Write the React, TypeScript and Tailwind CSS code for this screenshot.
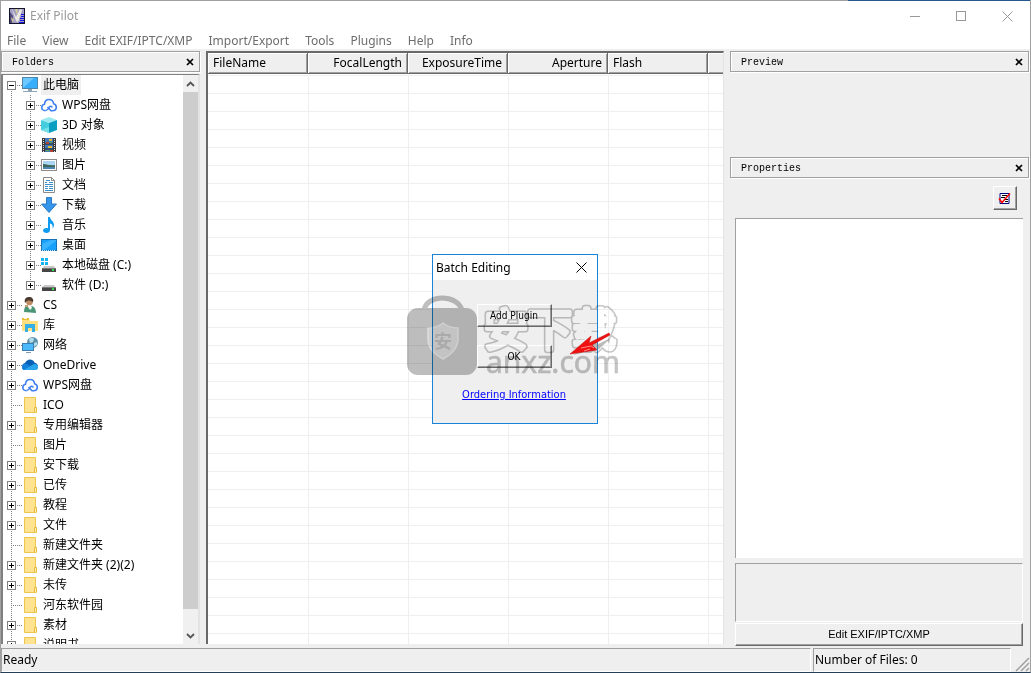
import type { ReactNode } from "react";

type IconName =
  | "pc" | "cloud" | "cube" | "video" | "picture" | "doc" | "download" | "music" | "desktop"
  | "sysdisk" | "disk" | "user" | "library" | "network" | "onedrive" | "folder";

interface Node {
  label: string;
  icon: IconName;
  level: 0 | 1;
  box: "plus" | "minus" | "none";
  edge?: "first" | "last";
}

const nodes: Node[] = [
  { label: "此电脑", icon: "pc", level: 0, box: "minus", edge: "first" },
  { label: "WPS网盘", icon: "cloud", level: 1, box: "plus" },
  { label: "3D 对象", icon: "cube", level: 1, box: "plus" },
  { label: "视频", icon: "video", level: 1, box: "plus" },
  { label: "图片", icon: "picture", level: 1, box: "plus" },
  { label: "文档", icon: "doc", level: 1, box: "plus" },
  { label: "下载", icon: "download", level: 1, box: "plus" },
  { label: "音乐", icon: "music", level: 1, box: "plus" },
  { label: "桌面", icon: "desktop", level: 1, box: "plus" },
  { label: "本地磁盘 (C:)", icon: "sysdisk", level: 1, box: "plus" },
  { label: "软件 (D:)", icon: "disk", level: 1, box: "plus", edge: "last" },
  { label: "CS", icon: "user", level: 0, box: "plus" },
  { label: "库", icon: "library", level: 0, box: "plus" },
  { label: "网络", icon: "network", level: 0, box: "plus" },
  { label: "OneDrive", icon: "onedrive", level: 0, box: "plus" },
  { label: "WPS网盘", icon: "cloud", level: 0, box: "plus" },
  { label: "ICO", icon: "folder", level: 0, box: "none" },
  { label: "专用编辑器", icon: "folder", level: 0, box: "plus" },
  { label: "图片", icon: "folder", level: 0, box: "none" },
  { label: "安下载", icon: "folder", level: 0, box: "plus" },
  { label: "已传", icon: "folder", level: 0, box: "plus" },
  { label: "教程", icon: "folder", level: 0, box: "plus" },
  { label: "文件", icon: "folder", level: 0, box: "plus" },
  { label: "新建文件夹", icon: "folder", level: 0, box: "none" },
  { label: "新建文件夹 (2)(2)", icon: "folder", level: 0, box: "plus" },
  { label: "未传", icon: "folder", level: 0, box: "plus" },
  { label: "河东软件园", icon: "folder", level: 0, box: "none" },
  { label: "素材", icon: "folder", level: 0, box: "plus" },
  { label: "说明书", icon: "folder", level: 0, box: "plus" },
];

const drive = (
  <>
    <path d="M3 9h10l2 3H1z" fill="#c9c9c9" />
    <rect x="1" y="11" width="14" height="4" fill="#454545" />
    <path d="M1 11.5h14" stroke="#777" />
    <rect x="11" y="12" width="2" height="2" fill="#2fe04a" />
  </>
);

const iconArt: Record<IconName, ReactNode> = {
  pc: (
    <>
      <rect x="0.5" y="0.5" width="15" height="11" fill="#36aefb" stroke="#4c86a8" />
      <path d="M1 11V1h11z" fill="#6cc8ff" />
      <rect x="6" y="12" width="4" height="2" fill="#8ca4b3" />
      <rect x="1" y="14" width="14" height="1" fill="#8ca4b3" />
    </>
  ),
  cloud: (
    <>
      <path d="M4.5 13.7C2.200 13.700.8 12.300.8 10.400c0-1.700 1.100-2.900 2.700-3.200C3.700 4.400 5.600 2.500 8.100 2.500c2.400 0 4.200 1.700 4.500 4.200 1.700.4 2.700 1.700 2.700 3.300 0 2-1.500 3.700-3.700 3.700H10L6.500 10" fill="none" stroke="#3f7ff0" strokeWidth="1.6" />
      <path d="M4.500 13.500c2.500 0 2.800-1.500 3.800-3.300.7-1.200 2.500-1.200 3 .2" fill="none" stroke="#3f7ff0" strokeWidth="1.500" />
    </>
  ),
  cube: (
    <>
      <path d="M0 3 8 0l8 3-8 3z" fill="#9be9f0" />
      <path d="M0 3l8 3v10l-8-3z" fill="#45cddd" />
      <path d="M16 3 8 6v10l8-3z" fill="#0a9fc0" />
      <path d="M0 13l8-3v6z" fill="#75dfe8" />
    </>
  ),
  video: (
    <>
      <rect x="1" y="1" width="14" height="14" fill="#3b3b3b" />
      <rect x="4" y="1" width="8" height="14" fill="#4379b8" />
      <path d="M2.500 2v13M13.500 2v13" stroke="#ddd" strokeDasharray="1 1" />
      <path d="M4 7h8M4 12h8" stroke="#222" />
      <path d="M8 2h3v2H8zM7 9h4v2H7z" fill="#e6bd2e" />
      <path d="M5 5h3v2H5zM9 13h3v2H9z" fill="#b5432e" />
      <path d="M9 5h2v1H9zM5 13h3v1H5z" fill="#54a843" />
    </>
  ),
  picture: (
    <>
      <rect x="0.500" y="2.500" width="15" height="11" fill="#fff" stroke="#8d8d8d" />
      <rect x="2" y="4" width="12" height="8" fill="#a9d5f2" />
      <path d="M2 7c4 0 6 2 12 1v2H2z" fill="#3c6655" />
      <rect x="2" y="10" width="12" height="2" fill="#4d86b5" />
    </>
  ),
  doc: (
    <>
      <path d="M2.500.5h8l3 3v12h-11z" fill="#fdfdfd" stroke="#8b8b8b" />
      <path d="M10.500.5v3h3" fill="none" stroke="#8b8b8b" />
      <path d="M5 3.500h4M4 5.500h2M8 5.500h4M4 7.500h8M4 9.500h3M8 9.500h4M4 11.500h3M8 11.500h4M4 13.500h8" stroke="#3b8fc9" />
    </>
  ),
  download: <path d="M5.500.5h5V7h5L8 15.500.5 7h5z" fill="#3595e8" stroke="#2a7cc8" />,
  music: <path d="M7 0h2c0 3 4 4 4 8 0 2-1 3-1.500 3.500.7-3-.5-4.500-2.500-5V13c0 1.800-1.500 3-3.500 3S2 15 2 13.500 3.500 11 5.500 11c.6 0 1 .1 1.500.3z" fill="#0f9bf0" />,
  desktop: (
    <>
      <rect x="0.500" y="2.500" width="15" height="11" fill="#18a0fb" stroke="#1572b8" />
      <path d="M1 13V7L10 3h5v1L3 13z" fill="#3cb3ff" />
      <path d="M1 13.500h14" stroke="#bfe4ff" strokeDasharray="1 1" />
    </>
  ),
  sysdisk: (
    <>
      {drive}
      <path d="M0 1h3v3H0zM4 1h3v3H4zM0 5h3v3H0zM4 5h3v3H4z" fill="#12b5ef" />
    </>
  ),
  disk: <g transform="translate(0 -1)">{drive}</g>,
  user: (
    <>
      <path d="M2 15c0-5 2-7 5-6 4-1 7 2 7 7z" fill="#4b9676" />
      <path d="M6 8h3l1 3-2 2-2-3z" fill="#f3f5ee" />
      <circle cx="7.500" cy="5" r="3.300" fill="#bd8a63" />
      <path d="M3 6C2 2 4 0 7 0s5 2 4 5c-2-1-4-2-6-1z" fill="#4b3a30" />
      <path d="M3 8h3v2H3z" fill="#c89870" />
    </>
  ),
  library: (
    <>
      <path d="M0 2h7l1 2h8v10H0z" fill="#ffdf7e" />
      <path d="M0 1h7v2H0z" fill="#edbd32" />
      <path d="M2 1.500h3" stroke="#fff6d2" />
      <path d="M3 7h10v8h-3v-4H6v4H3z" fill="#35afe5" />
    </>
  ),
  network: (
    <>
      <circle cx="10.500" cy="5.500" r="5.500" fill="#5d92ad" />
      <path d="M7 2c2-2 4-1 5 0l-1 3-3 1zM12 6l3-1v3l-3 2z" fill="#b4dce8" />
      <rect x="0.500" y="6.500" width="11" height="7" fill="#4bb8fa" stroke="#3a7fb0" />
      <path d="M4 15.500h5" stroke="#849baa" />
    </>
  ),
  onedrive: (
    <>
      <path d="M3 6C5 2 10 1 13 6c2 0 3 2 3 4l-8 3H3c-4 0-4-6 0-7z" fill="#0860b6" />
      <path d="M0 10c0-3 3-4 5-3l10 6H3c-2 0-3-1-3-3z" fill="#1380d9" />
      <path d="M2 13l8-5c4-3 7 1 6 3 0 1-1 2-3 2z" fill="#2aa7ec" />
    </>
  ),
  folder: (
    <>
      <path d="M2.500.5h11v10h1v5h-12z" fill="#ffe391" stroke="#edc64e" />
      <path d="M12.500 15v-4.500h2V15" fill="#fff0b5" stroke="#e5b93e" />
    </>
  ),
};

function Branch({ box, edge }: { box: Node["box"]; edge?: Node["edge"] }) {
  return (
    <svg width="19" height="20" viewBox="0 0 19 20" shapeRendering="crispEdges" aria-hidden="true">
      <path
        d={edge === "first" ? "M8.500 10v10" : edge === "last" ? "M8.500 0v10" : "M8.500 0v20"}
        stroke="#808080"
        strokeDasharray="1 1"
      />
      <path d="M8 10.500h11" stroke="#808080" strokeDasharray="1 1" />
      {box !== "none" && (
        <>
          <rect x="4.500" y="6.500" width="8" height="8" fill="#fff" stroke="#808080" />
          <path d={box === "plus" ? "M6 10.500h5M8.500 8v5" : "M6 10.500h5"} stroke="#000" />
        </>
      )}
    </svg>
  );
}

function TreeRow({ node }: { node: Node }) {
  return (
    <li className="flex h-5 items-center whitespace-nowrap">
      {node.level === 1 && (
        <svg width="19" height="20" viewBox="0 0 19 20" shapeRendering="crispEdges" aria-hidden="true">
          <path d="M8.500 0v20" stroke="#808080" strokeDasharray="1 1" />
        </svg>
      )}
      {node.box === "none" ? (
        <Branch box="none" />
      ) : (
        <button type="button" aria-label={`Toggle ${node.label}`}>
          <Branch box={node.box} edge={node.edge} />
        </button>
      )}
      <svg width="16" height="16" viewBox="0 0 16 16" aria-hidden="true">
        {iconArt[node.icon]}
      </svg>
      <span className={node.edge === "first" ? "ml-[3px] bg-[#efefef] px-[2px] leading-5" : "ml-[3px] px-[2px] leading-5"}>
        {node.label}
      </span>
    </li>
  );
}

function PanelHeader({ title }: { title: string }) {
  return (
    <div className="flex h-[21px] shrink-0 items-center justify-between border border-[#a0a0a0] pr-[5px] pl-[10px] shadow-[inset_1px_1px_0_#fff,1px_1px_0_#fff]">
      <h2 className="pt-[2px] font-['Liberation_Mono',monospace] text-[10px]">{title}</h2>
      <button type="button" aria-label={`Close ${title}`}>
        <svg width="8" height="8" viewBox="0 0 8 8" aria-hidden="true">
          <path d="M1 1l6 6M7 1L1 7" stroke="#000" strokeWidth="1.700" />
        </svg>
      </button>
    </div>
  );
}

const columns = [
  { name: "FileName", align: "text-left" },
  { name: "FocalLength", align: "text-right" },
  { name: "ExposureTime", align: "text-right" },
  { name: "Aperture", align: "text-right" },
  { name: "Flash", align: "text-left" },
];

function FileTable() {
  return (
    <section className="mb-[2px] ml-[6px] min-w-0 flex-1 overflow-hidden border-t-2 border-r border-l-2 border-t-[#696969] border-r-[#e3e3e3] border-l-[#696969] bg-white">
      <table className="w-full table-fixed border-separate border-spacing-0">
        <thead>
          <tr>
            {columns.map((c) => (
              <th
                key={c.name}
                className={`h-[21px] w-[100px] border-r border-b border-[#696969] bg-[#efefef] px-[5px] py-0 leading-5 font-normal shadow-[inset_1px_1px_0_#fff,inset_-1px_-1px_0_#a0a0a0] ${c.align}`}
              >
                {c.name}
              </th>
            ))}
            <th className="border-b border-[#696969] bg-[#efefef] shadow-[inset_1px_1px_0_#fff,inset_0_-1px_0_#a0a0a0]" />
          </tr>
        </thead>
        <tbody>
          <tr>
            <td colSpan={6} className="h-[2px] border-b border-[#efefef] p-0" />
          </tr>
          {Array.from({ length: 40 }, (_, row) => (
            <tr key={row}>
              <td className="h-[18px] border-b border-[#efefef] p-0" />
              {columns.map((c) => (
                <td key={c.name} className="border-b border-l border-[#efefef] p-0" />
              ))}
            </tr>
          ))}
        </tbody>
      </table>
    </section>
  );
}

function BatchDialog() {
  return (
    <div
      role="dialog"
      aria-label="Batch Editing"
      className="absolute top-[254px] left-[431px] flex h-[170px] w-[166px] flex-col border border-[#1883d7] bg-[#efefef]"
    >
      <div className="flex h-[25px] items-center justify-between bg-white pr-[10px] pl-[3px]">
        <h2>Batch Editing</h2>
        <button type="button" aria-label="Close dialog">
          <svg width="11" height="11" viewBox="0 0 11 11" aria-hidden="true">
            <path d="M.5.5l10 10M10.500.5l-10 10" stroke="#000" />
          </svg>
        </button>
      </div>
      <div className="flex flex-col items-center pt-6 pr-[2px] font-['DejaVu_Sans_Condensed','DejaVu_Sans',sans-serif] text-[10px]">
        <button
          type="button"
          className="h-[23px] w-[75px] border border-t-white border-r-[#696969] border-b-[#696969] border-l-white shadow-[inset_-1px_-1px_0_#a0a0a0]"
        >
          Add Plugin
        </button>
        <button
          type="button"
          className="mt-[18px] h-[23px] w-[75px] border border-t-white border-r-[#696969] border-b-[#696969] border-l-white shadow-[inset_-1px_-1px_0_#a0a0a0]"
        >
          OK
        </button>
        <a href="#order" className="mt-[19px] text-[11px] leading-4 text-[#0000ff] underline">
          Ordering Information
        </a>
      </div>
    </div>
  );
}

function Watermark() {
  return (
    <svg
      className="pointer-events-none absolute top-[290px] left-[401px] mix-blend-multiply"
      width="226"
      height="94"
      viewBox="0 0 226 94"
      aria-hidden="true"
    >
      <defs>
        <mask id="outline" maskUnits="userSpaceOnUse" x="72" y="8" width="154" height="60">
          <g fontFamily="Noto Sans CJK SC, sans-serif" fontSize="44" strokeLinejoin="round">
            <text x="82" y="56" fill="#fff" stroke="#fff" strokeWidth="7">安下载</text>
            <text x="82" y="56" fill="#000" stroke="#000" strokeWidth="4">安下载</text>
          </g>
        </mask>
      </defs>
      <path d="M22 20C25 4 55 4 60 20" fill="none" stroke="#bfbfbf" strokeWidth="5" />
      <rect x="5" y="18" width="70" height="67" rx="11" fill="#bdbdbd" />
      <path d="M41 33c5 4 10 5 15 5v11c0 9-6 15-15 20-9-5-15-11-15-20V38c5 0 10-1 15-5z" fill="#d0d0d0" stroke="#dddddd" strokeWidth="1.500" />
      <text x="32" y="58" fontFamily="Noto Sans CJK SC, sans-serif" fontWeight="700" fontSize="18" fill="#b6b6b6">安</text>
      <rect x="72" y="8" width="154" height="60" fill="#c6c6c6" mask="url(#outline)" />
      <text x="84" y="83" fontFamily="Noto Sans, sans-serif" fontSize="30" fill="#c4c4c4" stroke="#c4c4c4" strokeWidth="0.600">anxz.com</text>
    </svg>
  );
}

function Pointer() {
  return (
    <svg
      className="pointer-events-none absolute top-[330px] left-[566px]"
      width="46"
      height="30"
      viewBox="0 0 46 30"
      aria-hidden="true"
    >
      <path d="M6 25l26-6 12-11-13 6-2-4z" fill="#777" fillOpacity="0.500" />
      <path d="M3 24L24 6l-2 7L42 3l1 2-18 10 5 5z" fill="#f01010" stroke="#c00d0d" strokeWidth="0.500" />
      <path d="M14 18l10-2 3 2M17 21l6-2" fill="none" stroke="#ff8a80" />
    </svg>
  );
}

export default function App() {
  return (
    <div className="relative flex h-screen flex-col overflow-hidden border-x border-b border-x-[#a0a0a0] border-b-[#263f58] bg-[#efefef] font-['Noto_Sans','Noto_Sans_CJK_SC',sans-serif] text-[12px] leading-4 text-black">
      <div className="flex h-px shrink-0">
        <div className="flex-1 bg-[#a0a0a0]" />
        <div className="w-[182px] bg-[#25578a]" />
      </div>

      <header className="shrink-0 bg-white">
        <div className="flex h-[30px] items-center pr-[17px] pl-2 text-[#999]">
          <svg width="16" height="16" viewBox="0 0 16 16" aria-hidden="true">
            <rect width="16" height="16" fill="#15152b" />
            <rect x="1" y="1" width="14" height="14" fill="#a39fc4" />
            <path d="M1 4l3 4-1 7H1z" fill="#4c4778" />
            <path d="M3 1l4 8 4-8 2 1-4 12-2-1z" fill="#ece9e2" />
            <path d="M6 1h3L8 7zM2 9l3 3-2 2z" fill="#d5cc96" />
            <path d="M12 6.500h3M12 8.500h3M11 10.500h4M11 12.500h4M10 14.500h5" stroke="#1717e0" />
          </svg>
          <h1 className="ml-[5px] flex-1">Exif Pilot</h1>
          <div className="flex items-center gap-[35px]">
            <button type="button" aria-label="Minimize">
              <svg width="11" height="11" viewBox="0 0 11 11" aria-hidden="true"><path d="M0 5.500h10" stroke="#999" /></svg>
            </button>
            <button type="button" aria-label="Maximize">
              <svg width="11" height="11" viewBox="0 0 11 11" aria-hidden="true"><rect x="0.500" y="0.500" width="9" height="9" fill="none" stroke="#999" /></svg>
            </button>
            <button type="button" aria-label="Close">
              <svg width="11" height="11" viewBox="0 0 11 11" aria-hidden="true"><path d="M.5.5l10 10M10.500.5l-10 10" stroke="#999" /></svg>
            </button>
          </div>
        </div>
        <nav className="flex h-[18px] items-end gap-4 pl-[6px] text-[#6d6d6d]">
          {["File", "View", "Edit EXIF/IPTC/XMP", "Import/Export", "Tools", "Plugins", "Help", "Info"].map((item) => (
            <button key={item} type="button">{item}</button>
          ))}
        </nav>
      </header>

      <main className="flex min-h-0 flex-1 pt-[2px] pb-[2px]">
        <aside className="mb-[2px] flex w-[199px] shrink-0 flex-col">
          <PanelHeader title="Folders" />
          <div className="mt-[2px] flex min-h-0 flex-1 border-t border-r-2 border-l-2 border-t-[#808080] border-r-[#e3e3e3] border-l-[#808080] bg-white">
            <ul className="min-w-0 flex-1 overflow-hidden">
              {nodes.map((node, i) => (
                <TreeRow key={i} node={node} />
              ))}
            </ul>
            <div className="flex w-[15px] flex-col items-center bg-[#f0f0f0]">
              <button type="button" aria-label="Scroll up" className="flex h-[17px] items-center">
                <svg width="9" height="6" viewBox="0 0 9 6" aria-hidden="true"><path d="M1 5l3.500-3.500L8 5" fill="none" stroke="#555" strokeWidth="1.800" /></svg>
              </button>
              <div className="w-full flex-1 bg-[#cdcdcd]" />
              <div className="h-[18px]" />
              <button type="button" aria-label="Scroll down" className="flex h-[17px] items-center">
                <svg width="9" height="6" viewBox="0 0 9 6" aria-hidden="true"><path d="M1 1l3.500 3.500L8 1" fill="none" stroke="#555" strokeWidth="1.800" /></svg>
              </button>
            </div>
          </div>
        </aside>

        <FileTable />

        <aside className="ml-[6px] flex w-[300px] shrink-0 flex-col pr-px">
          <PanelHeader title="Preview" />
          <div className="h-[85px]" />
          <PanelHeader title="Properties" />
          <div className="flex min-h-0 flex-1 flex-col pr-[6px] pl-[5px]">
            <button
              type="button"
              aria-label="Edit properties"
              className="mt-2 mr-[6px] flex h-6 w-6 shrink-0 items-center justify-center self-end border border-t-white border-r-[#696969] border-b-[#696969] border-l-white shadow-[inset_-1px_-1px_0_#a0a0a0]"
            >
              <svg width="14" height="13" viewBox="0 0 14 13" aria-hidden="true">
                <path d="M2 1.500h9v10H2z" fill="#fff" stroke="#000080" />
                <path d="M4 3.500h5M3 5.500h4M7 7.500h3M7 9.500h3" stroke="#000" />
                <path d="M1 6.500l3 4L7 7l5-5.500" fill="none" stroke="#f00" strokeWidth="1.500" />
              </svg>
            </button>
            <div className="mt-2 flex-1 border-t border-l border-[#a0a0a0] bg-white" />
            <div className="mt-[5px] h-[59px] shrink-0 border border-t-[#a0a0a0] border-r-white border-b-white border-l-[#a0a0a0]" />
            <button
              type="button"
              className="mt-px h-[23px] shrink-0 border border-t-white border-r-[#696969] border-b-[#696969] border-l-white pb-[2px] font-['Liberation_Sans',sans-serif] text-[11px] shadow-[inset_-1px_-1px_0_#a0a0a0]"
            >
              Edit EXIF/IPTC/XMP
            </button>
          </div>
        </aside>
      </main>

      <footer className="flex h-6 shrink-0 gap-[2px]">
        <p className="flex flex-1 items-center border border-t-[#a0a0a0] border-r-white border-b-white border-l-[#a0a0a0] pl-px">Ready</p>
        <p className="flex w-[198px] items-center border border-t-[#a0a0a0] border-r-white border-b-white border-l-[#a0a0a0] pl-px">Number of Files: 0</p>
        <svg className="ml-[2px] self-end" width="15" height="15" viewBox="0 0 15 15" aria-hidden="true">
          <path d="M1 14L14 1M6 14l8-8M11 14l3-3" stroke="#a0a0a0" strokeWidth="1.500" />
        </svg>
      </footer>

      <BatchDialog />
      <Watermark />
      <Pointer />
    </div>
  );
}
